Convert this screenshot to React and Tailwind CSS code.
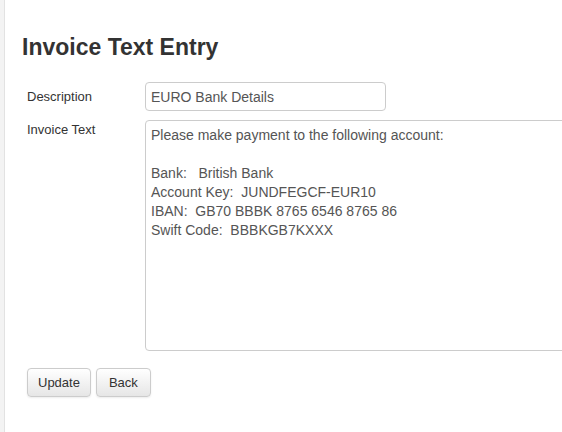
export default function App() {
  const invoiceText = `Please make payment to the following account:

Bank:   British Bank
Account Key:  JUNDFEGCF-EUR10
IBAN:  GB70 BBBK 8765 6546 8765 86
Swift Code:  BBBKGB7KXXX`;

  return (
    <div className="flex w-[562px] h-[432px] overflow-hidden bg-white font-['Liberation_Sans',Arial,sans-serif] text-[#333]">
      {/* left gutter */}
      <div className="flex-none w-[5px] bg-[#f3f3f3] border-r border-[#e2e2e2]" />

      <div className="flex-1 pl-[17px] pt-[33px]">
        <h1 className="text-[23px] font-bold leading-[28px] text-[#333]">Invoice Text Entry</h1>

        <div className="mt-[21px] flex flex-col gap-[9px] pl-[5px]">
          <div className="flex items-center">
            <label className="w-[118px] text-[13px]">Description</label>
            <input
              type="text"
              defaultValue="EURO Bank Details"
              className="w-[241px] h-[29px] px-[5px] text-[14px] text-[#555] border border-[#ccc] rounded-[4px] outline-none"
            />
          </div>

          <div className="flex items-start">
            <label className="w-[118px] text-[13px]">Invoice Text</label>
            <textarea
              defaultValue={invoiceText}
              className="flex-none w-[440px] h-[231px] px-[5px] pt-[5px] text-[14px] leading-[19px] text-[#555] border border-[#ccc] rounded-[4px] outline-none resize-none"
            />
          </div>
        </div>

        <div className="mt-[17px] ml-[5px] flex gap-[5px]">
          <button className="h-[29px] px-[10px] text-[13px] text-[#333] border border-[#ccc] rounded-[4px] bg-gradient-to-b from-white to-[#e6e6e6] shadow-[0_1px_2px_rgba(0,0,0,0.08)]">
            Update
          </button>
          <button className="h-[29px] px-[12px] text-[13px] text-[#333] border border-[#ccc] rounded-[4px] bg-gradient-to-b from-white to-[#e6e6e6] shadow-[0_1px_2px_rgba(0,0,0,0.08)]">
            Back
          </button>
        </div>
      </div>
    </div>
  );
}
